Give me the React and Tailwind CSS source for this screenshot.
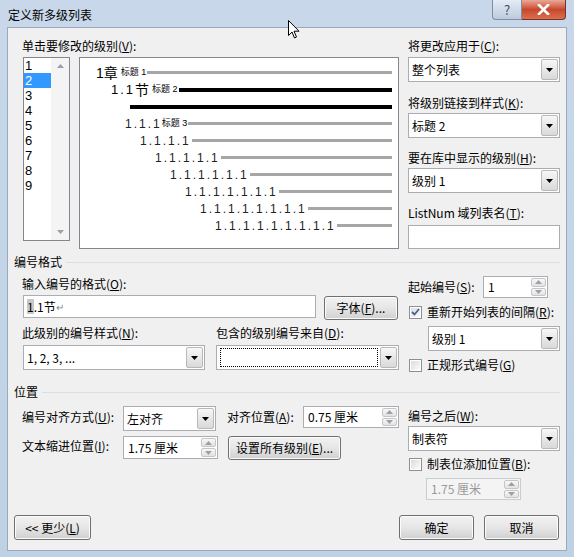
import React from "react";

function Arrow({ up, disabled }) {
  return (
    <svg width="7" height="4" viewBox="0 0 7 4" className="block">
      <path d={up ? "M0 4 L3.5 0 L7 4 Z" : "M0 0 L7 0 L3.5 4 Z"} fill={disabled ? "#9aa0a8" : "#000"} />
    </svg>
  );
}

function Combo({ className, children, dotted }) {
  return (
    <div className={`flex bg-white border border-[#abadb3] ${className}`}>
      <div className="flex-1 flex items-center min-w-0 pl-[3px] p-[2px]">
        {dotted ? (
          <div className="w-full h-full border border-dotted border-black"></div>
        ) : (
          <span className="leading-[16px] whitespace-nowrap">{children}</span>
        )}
      </div>
      <div className="w-[17px] my-[1px] mr-[1px] flex items-center justify-center border border-[#b9b9b9] rounded-[2px] bg-gradient-to-b from-[#f7f7f7] to-[#d9d9d9]">
        <Arrow />
      </div>
    </div>
  );
}

function Spin({ className, children, disabled }) {
  return (
    <div className={`flex border ${disabled ? "border-[#c9ccd1] bg-[#f4f4f4] text-[#9a9a9a]" : "border-[#abadb3] bg-white"} ${className}`}>
      <div className="flex-1 flex items-center pl-[4px] leading-[16px] whitespace-nowrap">{children}</div>
      <div className="w-[15px] my-[1px] mr-[1px] flex flex-col gap-[1px]">
        <div className="flex-1 flex items-center justify-center border border-[#c6c6c6] rounded-[2px] bg-gradient-to-b from-[#f8f8f8] to-[#e2e2e2]">
          <Arrow up disabled />
        </div>
        <div className="flex-1 flex items-center justify-center border border-[#c6c6c6] rounded-[2px] bg-gradient-to-b from-[#f8f8f8] to-[#e2e2e2]">
          <Arrow disabled />
        </div>
      </div>
    </div>
  );
}

function Check({ checked }) {
  return (
    <div className="w-[13px] h-[13px] border border-[#8e8f8f] bg-white p-[1px] shrink-0">
      <div className="w-full h-full bg-gradient-to-br from-[#dcdcdc] to-[#fbfbfb] flex items-center justify-center">
        {checked && (
          <svg width="9" height="8" viewBox="0 0 9 8">
            <path d="M1 4 L3.5 6.5 L8 1" fill="none" stroke="#4a5f97" strokeWidth="1.8" />
          </svg>
        )}
      </div>
    </div>
  );
}

function Btn({ className, children }) {
  return (
    <div className={`flex items-center justify-center rounded-[3px] border border-[#707070] bg-gradient-to-b from-[#f2f2f2] via-[#e6e6e6] to-[#d0d0d0] shadow-[inset_0_0_0_1px_#fbfbfb] ${className}`}>
      {children}
    </div>
  );
}

function Group({ title }) {
  return (
    <div className="flex items-center h-[16px] pl-[6px] pr-[6px]">
      <span className="leading-[16px]">{title}</span>
      <div className="flex-1 ml-[4px] h-px bg-[#d5dfe5]"></div>
    </div>
  );
}

const rows = [
  { pl: "pl-[45px]", n: "1.1.1", tag: "标题 3" },
  { pl: "pl-[60px]", n: "1.1.1.1" },
  { pl: "pl-[75px]", n: "1.1.1.1.1" },
  { pl: "pl-[90px]", n: "1.1.1.1.1.1" },
  { pl: "pl-[105px]", n: "1.1.1.1.1.1.1" },
  { pl: "pl-[120px]", n: "1.1.1.1.1.1.1.1" },
  { pl: "pl-[135px]", n: "1.1.1.1.1.1.1.1.1" },
];

export default function App() {
  return (
    <div className="relative w-[574px] h-[557px] flex flex-col bg-gradient-to-b from-[#c8d8ea] to-[#bfd1e5] text-[12px] text-black font-['Microsoft_YaHei','Noto_Sans_CJK_SC',sans-serif] overflow-hidden select-none">
      {/* title bar */}
      <div className="h-[27px] flex">
        <div className="flex-1 pl-[8px] pt-[6px] leading-[18px] text-[12px]">定义新多级列表</div>
        <div className="flex mr-[8px] self-start">
          <div className="w-[30px] h-[20px] rounded-bl-[4px] border border-t-0 border-[#7d8ea5] bg-gradient-to-b from-[#e4ecf5] to-[#bccbdd] flex items-center justify-center text-[13px] text-[#3d4a5c] leading-none">
            ?
          </div>
          <div className="w-[44px] h-[20px] rounded-br-[4px] border border-t-0 border-l-0 border-[#7a3226] bg-gradient-to-b from-[#e9a897] via-[#c8472c] to-[#d8704f] flex items-center justify-center">
            <svg width="13" height="11" viewBox="0 0 13 11">
              <path d="M2 1 L11 10 M11 1 L2 10" stroke="#ffffff" strokeWidth="2.6" strokeLinecap="square" />
            </svg>
          </div>
        </div>
      </div>

      {/* client */}
      <div className="mx-[7px] h-[524px] border border-[#9aa9bd] bg-[#f0f0f0] flex flex-col">
        {/* section A */}
        <div className="flex pt-[10px] h-[221px]">
          <div className="w-[400px] pl-[14px]">
            <div className="h-[16px] leading-[16px]">单击要修改的级别(<u>V</u>):</div>
            <div className="flex mt-[3px]">
              <div className="ml-[1px] w-[47px] h-[184px] border border-[#828790] bg-white flex">
                <div className="w-[27px] flex flex-col text-[13px] font-['Liberation_Sans',sans-serif]">
                  {[1, 2, 3, 4, 5, 6, 7, 8, 9].map((n) => (
                    <div
                      key={n}
                      className={`h-[15px] leading-[15px] pl-[1px] ${n === 2 ? "bg-[#3399ff] text-white" : ""}`}
                    >
                      {n}
                    </div>
                  ))}
                </div>
                <div className="flex-1 bg-[#f4f4f4] flex flex-col items-center justify-between py-[6px]">
                  <Arrow up disabled />
                  <Arrow disabled />
                </div>
              </div>
              <div className="ml-[9px] w-[320px] h-[192px] border border-[#828790] bg-white pt-[6px] pr-[6px] font-['Liberation_Sans','Noto_Sans_CJK_SC',sans-serif]">
                <div className="flex items-center h-[17px] pl-[16px]">
                  <span className="text-[14px] leading-none">1章</span>
                  <span className="text-[9px] ml-[3px] leading-none">标题 1</span>
                  <div className="flex-1 ml-[1px] h-[3px] bg-[#a6a6a6]"></div>
                </div>
                <div className="flex items-center h-[17px] pl-[31px]">
                  <span className="text-[13px] leading-none tracking-[2px]">1.1</span>
                  <span className="text-[14px] leading-none">节</span>
                  <span className="text-[9px] ml-[3px] leading-none">标题 2</span>
                  <div className="flex-1 ml-[1px] h-[4px] bg-black"></div>
                </div>
                <div className="flex items-center h-[17px] pl-[50px]">
                  <div className="flex-1 h-[4px] bg-black"></div>
                </div>
                {rows.map((r) => (
                  <div key={r.n} className={`flex items-center h-[17px] ${r.pl}`}>
                    <span className="text-[12px] leading-none tracking-[2px] text-[#222]">{r.n}</span>
                    {r.tag && <span className="text-[9px] leading-none">{r.tag}</span>}
                    <div className="flex-1 ml-[1px] h-[3px] bg-[#a6a6a6]"></div>
                  </div>
                ))}
              </div>
            </div>
          </div>
          <div className="w-[152px] flex flex-col">
            <div className="h-[16px] leading-[16px]">将更改应用于(<u>C</u>):</div>
            <Combo className="mt-[3px] h-[25px]">整个列表</Combo>
            <div className="mt-[13px] h-[16px] leading-[16px]">将级别链接到样式(<u>K</u>):</div>
            <Combo className="mt-[2px] h-[25px]">标题 2</Combo>
            <div className="mt-[12px] h-[16px] leading-[16px]">要在库中显示的级别(<u>H</u>):</div>
            <Combo className="mt-[2px] h-[25px]">级别 1</Combo>
            <div className="mt-[12px] h-[16px] leading-[16px]">ListNum 域列表名(<u>T</u>):</div>
            <div className="mt-[4px] h-[24px] border border-[#abadb3] bg-white"></div>
          </div>
        </div>

        {/* section B */}
        <div className="mt-[5px]">
          <Group title="编号格式" />
        </div>
        <div className="flex">
          <div className="w-[400px] pl-[14px]">
            <div className="mt-[6px] h-[16px] leading-[16px]">输入编号的格式(<u>O</u>):</div>
            <div className="flex mt-[3px] items-start">
              <div className="ml-[1px] w-[293px] h-[23px] border border-[#abadb3] bg-white flex items-center pl-[3px]">
                <span className="bg-[#c8c8c8] leading-[15px]">1</span>
                <span className="leading-[15px]">.1节</span>
                <span className="text-[10px] text-[#888] leading-none">↵</span>
              </div>
              <Btn className="ml-[8px] mt-[1px] w-[74px] h-[24px]">字体(<u>F</u>)...</Btn>
            </div>
            <div className="flex mt-[5px] h-[16px] leading-[16px]">
              <div className="w-[194px]">此级别的编号样式(<u>N</u>):</div>
              <div>包含的级别编号来自(<u>D</u>):</div>
            </div>
            <div className="flex mt-[4px]">
              <Combo className="ml-[1px] w-[182px] h-[25px]">1, 2, 3, ...</Combo>
              <Combo className="ml-[11px] w-[183px] h-[25px]" dotted />
            </div>
          </div>
          <div className="w-[152px] flex flex-col">
            <div className="flex items-center mt-[6px] h-[22px]">
              <div className="w-[75px]">起始编号(<u>S</u>):</div>
              <Spin className="w-[65px] h-[22px]">1</Spin>
            </div>
            <div className="flex items-center mt-[6px] h-[16px]">
              <div className="ml-[1px]">
                <Check checked />
              </div>
              <span className="ml-[5px] whitespace-nowrap">重新开始列表的间隔(<u>R</u>):</span>
            </div>
            <Combo className="mt-[6px] ml-[20px] w-[132px] h-[25px]">级别 1</Combo>
            <div className="flex items-center mt-[6px] h-[16px]">
              <div className="ml-[1px]">
                <Check />
              </div>
              <span className="ml-[5px]">正规形式编号(<u>G</u>)</span>
            </div>
          </div>
        </div>

        {/* section C */}
        <div className="mt-[11px]">
          <Group title="位置" />
        </div>
        <div className="flex">
          <div className="w-[400px] pl-[14px]">
            <div className="flex items-start mt-[6px]">
              <div className="w-[101px] mt-[3px] h-[16px] leading-[16px]">编号对齐方式(<u>U</u>):</div>
              <Combo className="w-[93px] h-[25px]">左对齐</Combo>
              <div className="ml-[11px] w-[76px] mt-[3px] h-[16px] leading-[16px]">对齐位置(<u>A</u>):</div>
              <Spin className="w-[96px] h-[22px]">0.75 厘米</Spin>
            </div>
            <div className="flex items-start mt-[5px]">
              <div className="w-[101px] mt-[2px] h-[16px] leading-[16px]">文本缩进位置(<u>I</u>):</div>
              <Spin className="w-[95px] h-[23px]">1.75 厘米</Spin>
              <Btn className="ml-[10px] w-[113px] h-[24px]">设置所有级别(<u>E</u>)...</Btn>
            </div>
          </div>
          <div className="w-[152px] flex flex-col">
            <div className="mt-[8px] h-[16px] leading-[16px]">编号之后(<u>W</u>):</div>
            <Combo className="mt-[2px] h-[25px]">制表符</Combo>
            <div className="flex items-center mt-[5px] h-[16px]">
              <div className="ml-[1px]">
                <Check />
              </div>
              <span className="ml-[5px] whitespace-nowrap">制表位添加位置(<u>B</u>):</span>
            </div>
            <Spin className="mt-[6px] ml-[18px] w-[95px] h-[22px]" disabled>
              1.75 厘米
            </Spin>
          </div>
        </div>

        {/* buttons */}
        <div className="mt-auto mb-[10px] flex">
          <Btn className="ml-[6px] w-[77px] h-[25px]">&lt;&lt; 更少(<u>L</u>)</Btn>
          <div className="flex-1"></div>
          <Btn className="w-[75px] h-[25px]">确定</Btn>
          <Btn className="ml-[10px] mr-[7px] w-[75px] h-[25px]">取消</Btn>
        </div>
      </div>
      <div className="h-[6px]"></div>

      {/* mouse pointer */}
      <svg className="absolute left-[288px] top-[20px]" width="12" height="19" viewBox="0 0 12 19">
        <path d="M0.5 0.5 L0.5 15.5 L4 12 L6.5 18 L8.5 17 L6 11.2 L11 11.2 Z" fill="#ffffff" stroke="#000000" strokeWidth="1" strokeLinejoin="round" />
      </svg>
    </div>
  );
}
